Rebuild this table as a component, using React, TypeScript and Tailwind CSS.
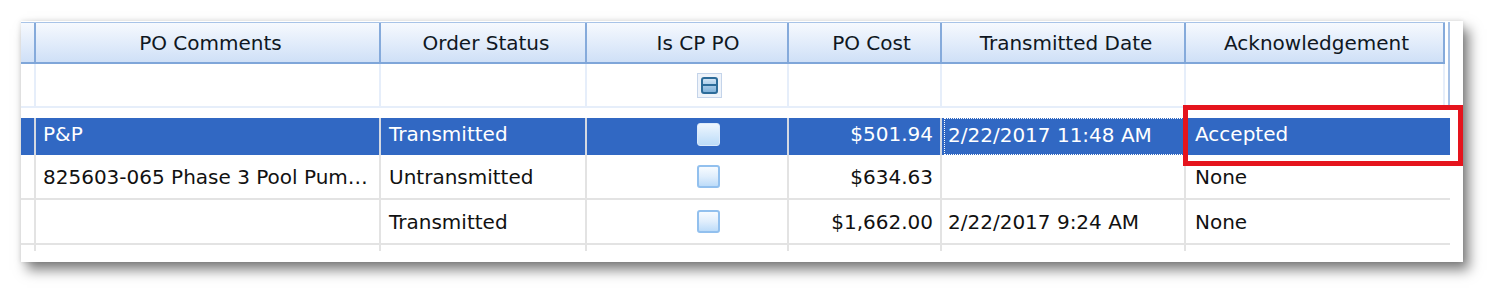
import React from "react"

type Col = { key: string; label: string; w: string }

const cols: Col[] = [
    { key: "comments", label: "PO Comments", w: "w-[345px]" },
    { key: "status", label: "Order Status", w: "w-[206px]" },
    { key: "cp", label: "Is CP PO", w: "w-[202px]" },
    { key: "cost", label: "PO Cost", w: "w-[153px]" },
    { key: "date", label: "Transmitted Date", w: "w-[244px]" },
]

const rows = [
    { comments: "P&P", status: "Transmitted", cost: "$501.94", date: "2/22/2017 11:48 AM", ack: "Accepted", selected: true },
    { comments: "825603-065 Phase 3 Pool Pum…", status: "Untransmitted", cost: "$634.63", date: "", ack: "None", selected: false },
    { comments: "", status: "Transmitted", cost: "$1,662.00", date: "2/22/2017 9:24 AM", ack: "None", selected: false },
]

const Checkbox = ({ selected }: { selected: boolean }) => (
    <div
        className={
            selected
                ? "w-[23px] h-[23px] rounded-[3px] border border-[#dbeafb] bg-gradient-to-b from-[#eef6fe] to-[#bcdcf8]"
                : "w-[23px] h-[23px] rounded-[3px] border-2 border-[#92c0ee] bg-gradient-to-b from-[#f7fbff] via-[#e0eefc] to-[#bddcf9]"
        }
    />
)

const Indeterminate = () => (
    <div className="w-[25px] h-[25px] border border-[#c4d4ea] bg-[#eef3fa] flex items-center justify-center">
        <div className="w-[17px] h-[17px] rounded-[3px] border-2 border-[#2c6b99] bg-gradient-to-b from-[#cfe3f5] to-[#7fb1d9] flex items-center">
            <div className="w-full h-[2px] bg-[#2c6b99]" />
        </div>
    </div>
)

export default function App() {
    return (
        <div className="w-[1496px] h-[295px] bg-white pt-[21px] pl-[21px] font-['DejaVu_Sans',sans-serif] text-[20px] overflow-hidden">
            <div className="relative w-[1442px] h-[241px] bg-white shadow-[0_0_5px_rgba(0,0,0,0.12),6px_8px_12px_rgba(0,0,0,0.5)]">
                {/* header + filter row */}
                <div className="flex pt-px">
                    <div className="w-[1424px]">
                        <div className="flex h-[42px] border-t border-[#a8c3e7] border-b-2 border-b-[#7fa6d9] bg-gradient-to-b from-[#f6f9fe] to-[#cfe0f7] text-[#0f1722]">
                            <div className="w-[15px] border-r-2 border-[#85aadb]" />
                            {cols.map((c) => (
                                <div key={c.key} className={`${c.w} border-r-2 border-[#85aadb] flex items-center justify-center ${c.key === "cp" ? "pl-[22px]" : c.key === "cost" ? "pl-[14px]" : "pl-[6px]"}`}>
                                    {c.label}
                                </div>
                            ))}
                            <div className="w-[259px] border-r-2 border-[#85aadb] flex items-center justify-center pl-[4px]">
                                Acknowledgement
                            </div>
                        </div>
                        <div className="flex h-[44px] border-b-2 border-[#e6eefa]">
                            <div className="w-[15px] border-r-2 border-[#e6eefa]" />
                            {cols.map((c) => (
                                <div key={c.key} className={`${c.w} border-r-2 border-[#e6eefa] flex items-center justify-center pl-[44px]`}>
                                    {c.key === "cp" && <Indeterminate />}
                                </div>
                            ))}
                            <div className="w-[259px] border-r-2 border-[#e6eefa]" />
                        </div>
                    </div>
                    <div className="w-[3px]" />
                    <div className="w-[2px] h-[83px] bg-[#a6c1e6]" />
                </div>

                {/* data rows */}
                <div className="mt-[10px] w-[1429px]">
                    {rows.map((r, i) => {
                        const sep = r.selected ? "border-r-2 border-[#d4d9e2]" : "border-r-2 border-[#e3e3e3]"
                        const shift = r.selected ? "pb-[5px]" : ""
                        return (
                            <div
                                key={i}
                                className={
                                    r.selected
                                        ? "flex h-[37px] bg-[#3168c3] text-white"
                                        : "flex h-[45px] border-b-2 border-[#e3e3e3] text-[#111111]"
                                }
                            >
                                <div className={`w-[15px] ${sep}`} />
                                <div className={`w-[345px] ${sep} ${shift} flex items-center px-[7px] whitespace-nowrap`}>
                                    {r.comments}
                                </div>
                                <div className={`w-[206px] ${sep} ${shift} flex items-center px-[8px]`}>{r.status}</div>
                                <div className={`w-[202px] ${sep} ${shift} flex items-center justify-center pl-[42px]`}>
                                    <Checkbox selected={r.selected} />
                                </div>
                                <div className={`w-[153px] ${sep} ${shift} flex items-center justify-end pr-[7px]`}>{r.cost}</div>
                                <div className={`w-[244px] ${sep} flex items-center ${r.selected ? "pl-[2px]" : "px-[6px]"}`}>
                                    {r.selected ? (
                                        <div className="w-full h-full border border-dotted border-white pl-[3px] pb-[4px] flex items-center">
                                            {r.date}
                                        </div>
                                    ) : (
                                        r.date
                                    )}
                                </div>
                                <div className={`w-[264px] ${shift} flex items-center px-[9px]`}>{r.ack}</div>
                            </div>
                        )
                    })}
                    <div className="flex h-[6px]">
                        <div className="w-[15px] border-r-2 border-[#e3e3e3]" />
                        {cols.map((c) => (
                            <div key={c.key} className={`${c.w} border-r-2 border-[#e3e3e3]`} />
                        ))}
                    </div>
                </div>

                {/* red highlight annotation */}
                <div className="absolute left-[1162px] top-[84px] w-[280px] h-[61px] border-[5px] border-[#e5141d]" />
            </div>
        </div>
    )
}
